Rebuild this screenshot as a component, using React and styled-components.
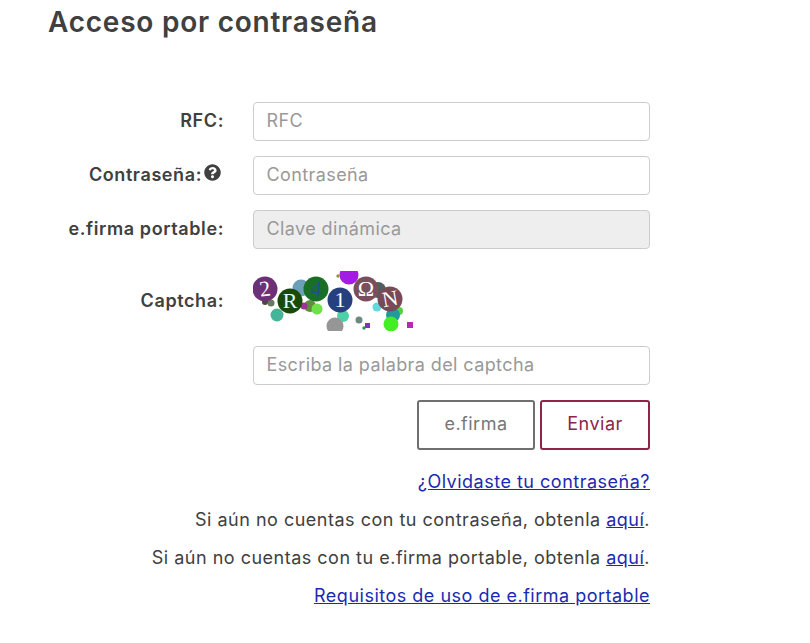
import React from 'react';
import styled, { createGlobalStyle } from 'styled-components';
import { FaQuestionCircle } from 'react-icons/fa';

const Global = createGlobalStyle`
  html, body { margin: 0; padding: 0; background: #fff; }
  body { font-family: Inter, "Noto Sans", sans-serif; color: #3f3f3f; }
`;

const Page = styled.div`
  width: 810px;
  height: 643px;
  overflow: hidden;
  padding-left: 48px;
  box-sizing: border-box;
`;

const Title = styled.h1`
  margin: 0;
  padding-top: 4px;
  height: 102px;
  box-sizing: border-box;
  font-size: 28px;
  line-height: 36px;
  font-weight: 600;
  letter-spacing: 0.76px;
  color: #404040;
`;

const Form = styled.form`
  width: 602px;
  display: grid;
  grid-template-columns: 176px 397px;
  column-gap: 29px;
  row-gap: 15px;
  align-items: center;
`;

const Label = styled.label`
  display: flex;
  justify-content: flex-end;
  align-items: center;
  gap: 2px;
  font-size: 18px;
  font-weight: 600;
  letter-spacing: 0.6px;
  color: #404040;
  white-space: nowrap;
  margin-right: ${p => (p.$hint ? '3px' : '0')};
  position: relative;
  top: ${p => p.$top || 0}px;
`;

const HintIcon = styled(FaQuestionCircle)`
  position: relative;
  top: -2px;
`;

const Input = styled.input`
  width: 100%;
  height: 39px;
  box-sizing: border-box;
  padding: 0 12.5px 2px;
  border: 1px solid #ccc;
  border-radius: 4px;
  font-family: inherit;
  font-size: 18px;
  letter-spacing: 0.4px;
  background: ${p => (p.disabled ? '#eee' : '#fff')};
  &::placeholder { color: #999; opacity: 1; }
`;

const CaptchaBox = styled.div`
  height: 60px;
  margin-top: 7px;
`;

const Spacer = styled.div``;

const Buttons = styled.div`
  grid-column: 2;
  display: flex;
  justify-content: flex-end;
  gap: 5px;
`;

const Button = styled.button`
  width: ${p => p.$w}px;
  height: 50px;
  box-sizing: border-box;
  padding: 0 0 3px;
  background: #fff;
  border: 2px solid ${p => p.$color};
  border-radius: 3px;
  font-family: inherit;
  font-size: 18px;
  letter-spacing: 0.5px;
  color: ${p => p.$text};
`;

const Links = styled.div`
  grid-column: 2;
  width: 602px;
  margin-left: -205px;
  margin-top: 5px;
  display: flex;
  flex-direction: column;
  gap: 15px;
`;

const Line = styled.p`
  margin: 0;
  text-align: right;
  font-size: 18px;
  line-height: 23px;
  letter-spacing: 0.5px;
  color: #404040;
  a { color: #1a2bb0; text-decoration: underline; }
`;

const dots = [
  [349, 275, 9.5, '#a31ce6'], [338, 276, 1.7, '#8a9a30'], [301, 288, 8.5, '#6a9fb5'],
  [271, 303, 3.5, '#6a7a60'], [265, 302, 3, '#4a4a3a'], [277, 315, 6.5, '#45b59a'],
  [310, 306, 6, '#5f8f3a'], [317, 309, 5.5, '#6fe04a'], [304, 306, 3.5, '#a0309a'],
  [343, 316, 6, '#4fcfa8'], [335, 326, 8.5, '#969696'], [378, 290, 8, '#4f5f60'],
  [377, 307, 4.5, '#63d8e0'], [399, 311, 4, '#57d040'], [393, 315, 7, '#1f9aa0'],
  [391, 324, 7.5, '#43ee22'], [359, 320, 3.5, '#6a8a80'], [364, 328, 1.7, '#2f8f6a'],
];
const squares = [[365, 323, 5, '#7a35c8'], [407, 322, 6, '#b52ab5']];
const chars = [
  [265, 289, '#6b3076', '2', '#fff', -8], [290, 301, '#1a4a0a', 'R', '#dff', 0],
  [316, 289, '#1a6f28', '4', '#1f4f8f', 6], [340, 300, '#26407f', '1', '#fff', 0],
  [366, 289, '#7a4f5c', 'Ω', '#fff', 0], [390, 299, '#774a55', 'N', '#fff', -10],
];

function Captcha() {
  return (
    <svg width="160" height="60" viewBox="253 271 160 60" style={{ display: 'block' }}>
      {dots.map(([x, y, r, c], i) => <circle key={i} cx={x} cy={y} r={r} fill={c} />)}
      {squares.map(([x, y, s, c], i) => <rect key={i} x={x} y={y} width={s} height={s} fill={c} />)}
      {chars.map(([x, y, c, t, tc, rot], i) => (
        <g key={i}>
          <circle cx={x} cy={y} r="12.5" fill={c} />
          <text x={x} y={y + 7} transform={`rotate(${rot} ${x} ${y})`} textAnchor="middle" fontFamily="Liberation Serif" fontSize="22" fill={tc}>{t}</text>
        </g>
      ))}
    </svg>
  );
}

export default function App() {
  return (
    <Page>
      <Global />
      <Title>Acceso por contraseña</Title>
      <Form>
        <Label $top={-1}>RFC:</Label>
        <Input placeholder="RFC" />
        <Label $hint $top={-1}>Contraseña:<HintIcon size={17} color="#404040" /></Label>
        <Input placeholder="Contraseña" />
        <Label $top={-1}>e.firma portable:</Label>
        <Input placeholder="Clave dinámica" disabled />
        <Label $top={3}>Captcha:</Label>
        <CaptchaBox><Captcha /></CaptchaBox>
        <Spacer />
        <Input placeholder="Escriba la palabra del captcha" />
        <Buttons>
          <Button type="button" $w={118} $color="#6f6f6f" $text="#777">e.firma</Button>
          <Button type="button" $w={110} $color="#8e2547" $text="#8e2547">Enviar</Button>
        </Buttons>
        <Links>
          <Line><a href="#o">¿Olvidaste tu contraseña?</a></Line>
          <Line>Si aún no cuentas con tu contraseña, obtenla <a href="#a">aquí</a>.</Line>
          <Line>Si aún no cuentas con tu e.firma portable, obtenla <a href="#b">aquí</a>.</Line>
          <Line><a href="#r">Requisitos de uso de e.firma portable</a></Line>
        </Links>
      </Form>
    </Page>
  );
}
